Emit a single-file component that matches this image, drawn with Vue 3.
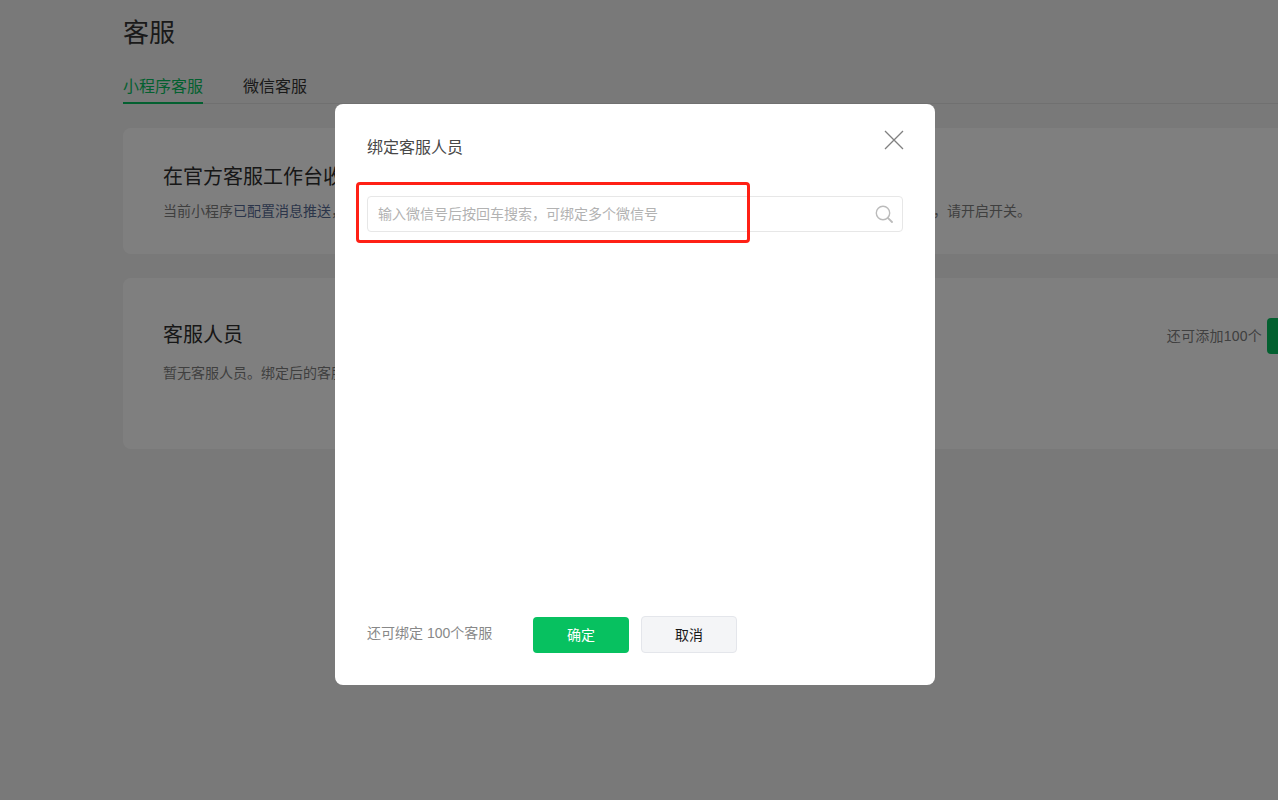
<script setup>
const tabs = ['小程序客服', '微信客服']
</script>

<template>
  <div class="page">
    <h1 class="page-title">客服</h1>
    <div class="tabs">
      <span v-for="(tab, i) in tabs" :key="tab" class="tab" :class="{ active: i === 0 }">{{ tab }}</span>
    </div>

    <section class="card card-top">
      <h2 class="card-title">在官方客服工作台收发消息</h2>
      <p class="card-desc">当前小程序<span class="link">已配置消息推送</span>，无法在官方客服工作台收发消息。如需在官方客服工作台收发消息，请先关闭消息推送配置后再，请开启开关。</p>
    </section>

    <section class="card card-staff">
      <div class="staff-info">
        <h2 class="card-title">客服人员</h2>
        <p class="card-desc">暂无客服人员。绑定后的客服人员可以在工作台收发消息。</p>
      </div>
      <div class="staff-add">
        <span class="staff-count">还可添加100个</span>
        <button class="btn btn-primary add-btn">添加</button>
      </div>
    </section>

    <div class="mask">
      <div class="dialog">
        <div class="dialog-head">
          <h3 class="dialog-title">绑定客服人员</h3>
          <svg class="close" width="20" height="20" viewBox="0 0 20 20" fill="none">
            <path d="M1 1 L19 19 M19 1 L1 19" stroke="#808080" stroke-width="1.3" />
          </svg>
        </div>

        <div class="search">
          <span class="placeholder">输入微信号后按回车搜索，可绑定多个微信号</span>
          <svg class="search-icon" width="18" height="18" viewBox="0 0 18 18" fill="none">
            <circle cx="8" cy="8" r="6.7" stroke="#bbbbbb" stroke-width="1.4" />
            <path d="M12.8 12.8 L17 17" stroke="#bbbbbb" stroke-width="1.8" stroke-linecap="round" />
          </svg>
          <div class="annotation"></div>
        </div>

        <div class="dialog-foot">
          <span class="quota">还可绑定 100个客服</span>
          <button class="btn btn-primary">确定</button>
          <button class="btn btn-default">取消</button>
        </div>
      </div>
    </div>
  </div>
</template>

<style>
html,
body {
  overflow: hidden;
  background: #f2f2f2;
}
</style>

<style scoped>
.page {
  position: relative;
  box-sizing: border-box;
  width: 1278px;
  height: 800px;
  padding: 0 0 0 123px;
  overflow: hidden;
  font-family: "Liberation Sans", "Noto Sans CJK SC", sans-serif;
  color: #353535;
}

.page-title {
  margin: 0;
  padding-top: 14px;
  font-size: 26px;
  line-height: 38px;
  font-weight: 400;
}

.tabs {
  display: flex;
  gap: 40px;
  margin-top: 21px;
  width: 1155px;
  border-bottom: 1px solid #e0e0e0;
}

.tab {
  height: 30px;
  font-size: 16px;
  line-height: 28px;
  margin-bottom: -1px;
}

.tab.active {
  color: #07c160;
  border-bottom: 2px solid #07c160;
  height: 29px;
}

.card {
  flex: none;
  box-sizing: border-box;
  width: 1280px;
  background: #fff;
  border-radius: 8px;
  padding: 0 40px;
}

.card-top {
  height: 126px;
  margin-top: 24px;
  padding-top: 34px;
}

.card-staff {
  display: flex;
  justify-content: space-between;
  height: 171px;
  margin-top: 24px;
  padding-top: 42px;
}

.card-title {
  margin: 0;
  font-size: 20px;
  line-height: 30px;
  font-weight: 400;
  color: #2e2e2e;
}

.card-desc {
  margin: 13px 0 0;
  font-size: 14px;
  line-height: 20px;
  color: #7f7f7f;
  white-space: nowrap;
}

.card-top .card-desc {
  margin-top: 9px;
}

.link {
  color: #576b95;
}

.staff-add {
  display: flex;
  align-items: flex-start;
  gap: 5px;
  margin-top: -2px;
  font-size: 14px;
  line-height: 36px;
  color: #808080;
}

.staff-count {
  letter-spacing: 0.25px;
}

.btn {
  width: 96px;
  height: 36px;
  padding: 0;
  border: 0;
  border-radius: 4px;
  font-family: inherit;
  font-size: 14px;
  line-height: 36px;
}

.btn-primary {
  background: #07c160;
  color: #fff;
}

.btn-default {
  height: 37px;
  background: #f4f5f7;
  border: 1px solid #e4e6eb;
  color: #191919;
}

.mask {
  position: fixed;
  inset: 0;
  display: flex;
  align-items: center;
  justify-content: center;
  padding-right: 8px;
  background: rgba(0, 0, 0, 0.5);
}

.dialog {
  position: relative;
  display: flex;
  flex-direction: column;
  width: 600px;
  height: 581px;
  margin-top: -11px;
  padding: 0 32px;
  box-sizing: border-box;
  background: #fff;
  border-radius: 8px;
}

.dialog-head {
  display: flex;
  justify-content: space-between;
  height: 92px;
}

.dialog-title {
  margin: 32px 0 0;
  font-size: 16px;
  line-height: 24px;
  font-weight: 400;
  color: #484848;
}

.close {
  margin-top: 26px;
  margin-right: -1px;
}

.search {
  position: relative;
  display: flex;
  align-items: center;
  justify-content: space-between;
  height: 36px;
  padding: 0 10px;
  box-sizing: border-box;
  border: 1px solid #e7e7e7;
  border-radius: 4px;
}

.search-icon {
  margin-right: -1px;
}

.placeholder {
  margin-top: -2px;
  font-size: 14px;
  color: #b2b2b2;
}

.annotation {
  position: absolute;
  left: -12px;
  top: -15px;
  width: 394px;
  height: 61px;
  box-sizing: border-box;
  border: 3px solid #ff2015;
  border-radius: 4px;
}

.dialog-foot {
  display: flex;
  align-items: flex-start;
  margin-top: auto;
  margin-bottom: 32px;
}

.quota {
  width: 166px;
  font-size: 14px;
  line-height: 34px;
  color: #888;
}

.dialog-foot .btn-primary {
  margin-top: 1px;
}

.dialog-foot .btn-default {
  margin-left: 12px;
}
</style>
